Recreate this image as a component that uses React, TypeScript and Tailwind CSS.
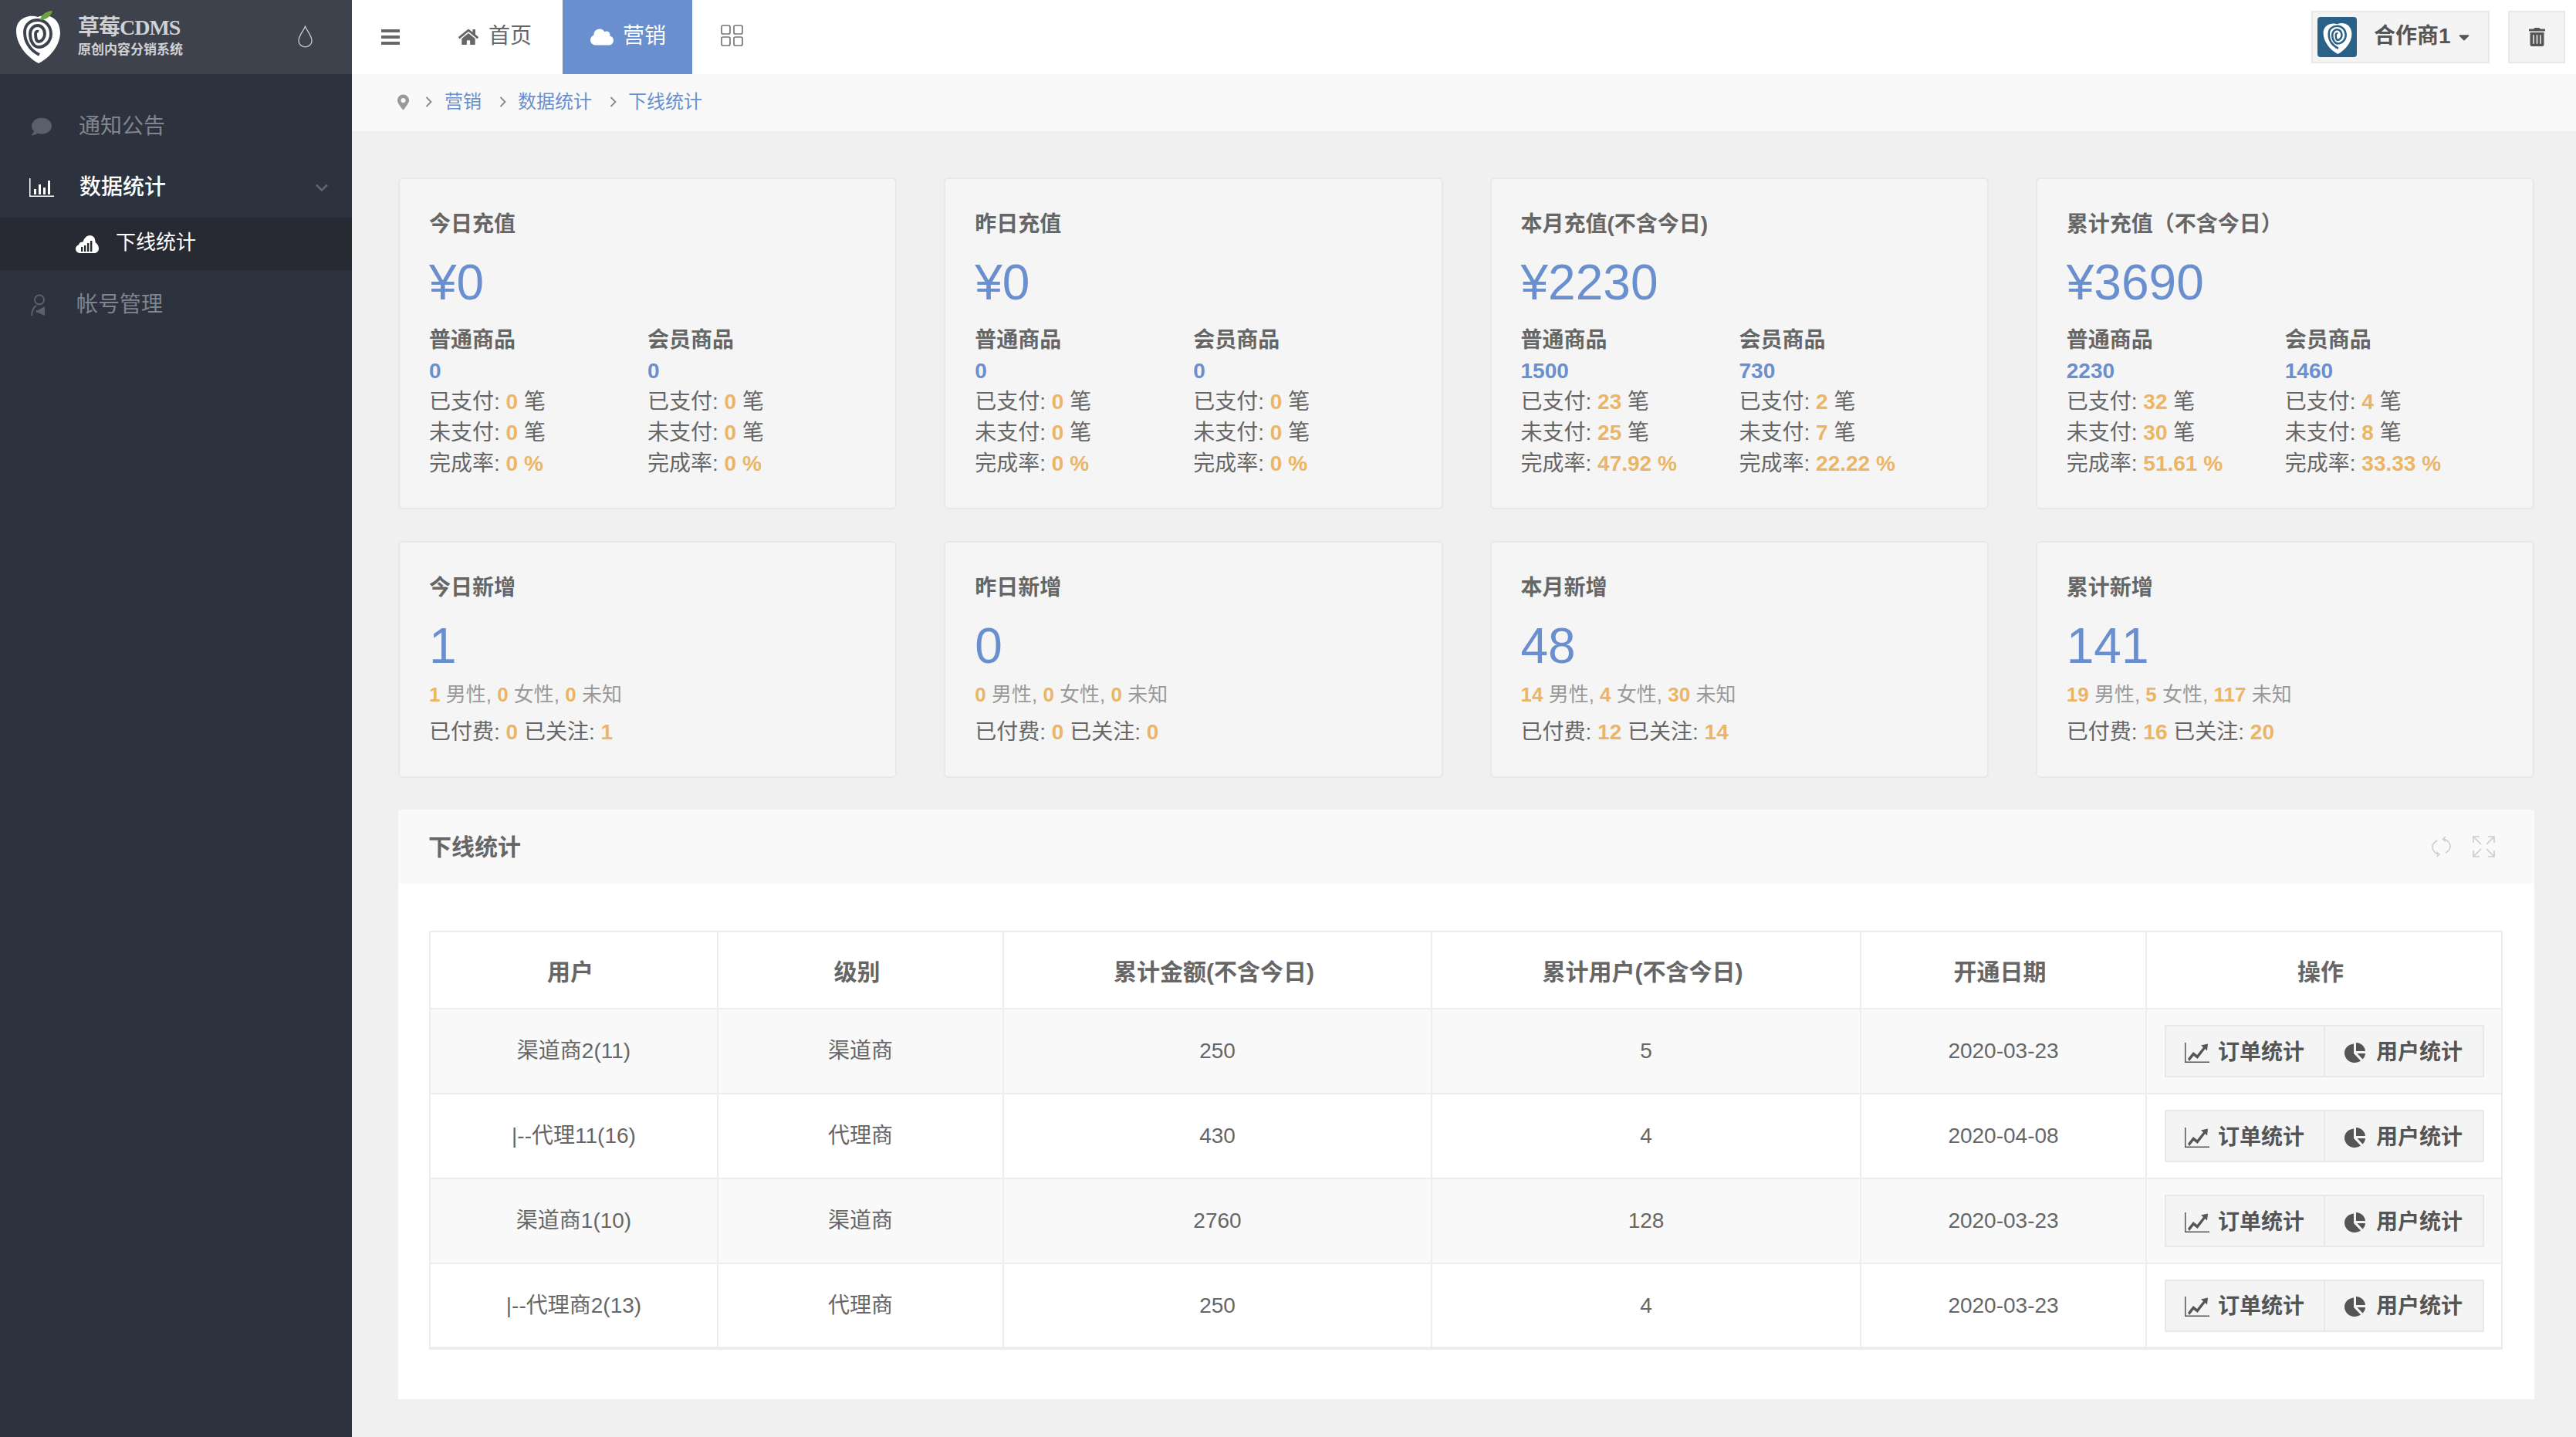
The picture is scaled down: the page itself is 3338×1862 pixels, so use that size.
import { FaCloud, FaComment, FaHome, FaMapMarkerAlt, FaTrashAlt, FaCaretDown } from "react-icons/fa";

function Fruit({ spiral, className }: { spiral: string; className?: string }) {
  return (
    <svg viewBox="0 0 57 68" className={className}>
      <path d="M28 8C38 4 56 6 57 28C57 46 42 62 29 68C14 60 0 44 0 26C0 10 16 4 28 8Z" fill="#fff" />
      <path
        d="M30 57C16 50 11 38 11 28C11 17 19 12 28 12C38 12 45 20 45 30C45 40 37 47 29 47C22 47 18 38 18 30C18 23 23 19 28 19C33 19 37 24 37 30C37 35 33 40 29 40C26 40 25 34 25 30C25 27 27 26 29 27"
        fill="none"
        stroke={spiral}
        strokeWidth="3.9"
      />
    </svg>
  );
}

function BarChartIcon({ className }: { className?: string }) {
  return (
    <svg viewBox="0 0 32 24" className={className} fill="currentColor">
      <path d="M0 0h1.500v22.500H32V24H0z" />
      <path d="M6 14h3v7H6zM12 8h3v13h-3zM18 12h3v9h-3zM24 3h3v18h-3z" />
    </svg>
  );
}

function CloudBarsIcon({ className }: { className?: string }) {
  return (
    <svg viewBox="0 0 30 23" className={className}>
      <path fill="#fff" d="M6 23C2.500 23 0 20.500 0 17.500C0 15 1.500 13 4 12.200C4.500 9.500 6.800 8 9.500 8.500C11 3.500 14.500 0 18.500 0C23 0 25.800 3.800 25.500 9C28 10.500 30 13.500 30 17C30 20.500 27.500 23 24 23Z" />
      <path fill="#272a33" d="M7 15h2.400v6H7zM11 13h2.400v8H11zM15 10h2.400v11H15zM19 7h2.400v14H19z" />
    </svg>
  );
}

function UserVoiceIcon({ className }: { className?: string }) {
  return (
    <svg viewBox="0 0 21 29" className={className} fill="none" stroke="currentColor" strokeWidth="2">
      <circle cx="11" cy="7.500" r="6" />
      <path d="M7 15C3 17 1.500 22 1 28" />
      <path fill="currentColor" stroke="none" d="M9 21l9-5v12l-9-4H7v-3z" />
    </svg>
  );
}

function DropIcon({ className }: { className?: string }) {
  return (
    <svg viewBox="0 0 20 30" className={className} fill="none" stroke="currentColor" strokeWidth="1.400">
      <path d="M10 1C7 8 1 14 1 20.500C1 25.500 5 29 10 29C15 29 19 25.500 19 20.500C19 14 13 8 10 1Z" />
    </svg>
  );
}

function AppsIcon({ className }: { className?: string }) {
  return (
    <svg viewBox="0 0 29 28" className={className} fill="none" stroke="currentColor" strokeWidth="1.700">
      <rect x="1" y="1" width="11" height="11" rx="2" />
      <rect x="17" y="1" width="11" height="11" rx="2" />
      <rect x="1" y="16" width="11" height="11" rx="2" />
      <rect x="17" y="16" width="11" height="11" rx="2" />
    </svg>
  );
}

function BarsIcon({ className }: { className?: string }) {
  return (
    <svg viewBox="0 0 24 20" className={className} fill="currentColor">
      <rect x="0" y="0" width="24" height="4" rx="0.500" />
      <rect x="0" y="8" width="24" height="4" rx="0.500" />
      <rect x="0" y="16" width="24" height="4" rx="0.500" />
    </svg>
  );
}

function LineChartIcon({ className }: { className?: string }) {
  return (
    <svg viewBox="0 0 32 26" className={className} fill="currentColor">
      <path d="M0 0h1.500v24.500H32V26H0z" />
      <path d="M4 21l7-9 5 4 8-10-3-2.500 9-2-1 9-2.500-2.500-10 13-5-4-5.500 7z" />
    </svg>
  );
}

function PieIcon({ className }: { className?: string }) {
  return (
    <svg viewBox="0 0 27 26" className={className} fill="currentColor">
      <path d="M12 1.500V14l9 9.500C18.800 25 16 26 13 26C5.800 26 0 20.200 0 13.500C0 7 5.300 2 12 1.500Z" />
      <path d="M15 0C21.500 0 26.500 5 27 11H15z" />
      <path d="M16.500 14H27C26.800 17 25.500 20 23.500 21.500z" />
    </svg>
  );
}

function RefreshIcon({ className }: { className?: string }) {
  return (
    <svg viewBox="0 0 25 28" className={className} fill="none" stroke="currentColor" strokeWidth="1.500">
      <path d="M7 6C3.500 8 1 10.500 1 14.500C1 18.500 4 22 8 24" />
      <path d="M18 22C21.500 20 24 17.500 24 13.500C24 9.500 21 6 16 4" />
      <path d="M18 1L14.500 4.200L18 7.500M6.500 21L10 24L6.500 27" />
    </svg>
  );
}

function ExpandIcon({ className }: { className?: string }) {
  return (
    <svg viewBox="0 0 29 28" className={className} fill="none" stroke="currentColor" strokeWidth="1.600">
      <path d="M1 9V1H9M1 1L11 11M20 1H28V9M28 1L18 11M1 19V27H9M1 27L11 17M28 19V27H20M28 27L18 17" />
    </svg>
  );
}

const Chevron = () => (
  <svg viewBox="0 0 9 14" className="w-[9px] h-[14px] text-[#888]" fill="none" stroke="currentColor" strokeWidth="1.800">
    <path d="M1.500 1L7.500 7L1.500 13" />
  </svg>
);

const Num = ({ children }: { children: React.ReactNode }) => (
  <span className="font-bold text-[#ecb566]">{children}</span>
);

interface SalesSide {
  amount: string;
  paid: string;
  unpaid: string;
  rate: string;
}

const salesCards: { title: string; total: string; normal: SalesSide; member: SalesSide }[] = [
  {
    title: "今日充值",
    total: "¥0",
    normal: { amount: "0", paid: "0", unpaid: "0", rate: "0" },
    member: { amount: "0", paid: "0", unpaid: "0", rate: "0" },
  },
  {
    title: "昨日充值",
    total: "¥0",
    normal: { amount: "0", paid: "0", unpaid: "0", rate: "0" },
    member: { amount: "0", paid: "0", unpaid: "0", rate: "0" },
  },
  {
    title: "本月充值(不含今日)",
    total: "¥2230",
    normal: { amount: "1500", paid: "23", unpaid: "25", rate: "47.92" },
    member: { amount: "730", paid: "2", unpaid: "7", rate: "22.22" },
  },
  {
    title: "累计充值（不含今日）",
    total: "¥3690",
    normal: { amount: "2230", paid: "32", unpaid: "30", rate: "51.61" },
    member: { amount: "1460", paid: "4", unpaid: "8", rate: "33.33" },
  },
];

const userCards = [
  { title: "今日新增", total: "1", male: "1", female: "0", unknown: "0", paid: "0", follow: "1" },
  { title: "昨日新增", total: "0", male: "0", female: "0", unknown: "0", paid: "0", follow: "0" },
  { title: "本月新增", total: "48", male: "14", female: "4", unknown: "30", paid: "12", follow: "14" },
  { title: "累计新增", total: "141", male: "19", female: "5", unknown: "117", paid: "16", follow: "20" },
];

const rows = [
  { user: "渠道商2(11)", level: "渠道商", amount: "250", users: "5", date: "2020-03-23" },
  { user: "|--代理11(16)", level: "代理商", amount: "430", users: "4", date: "2020-04-08" },
  { user: "渠道商1(10)", level: "渠道商", amount: "2760", users: "128", date: "2020-03-23" },
  { user: "|--代理商2(13)", level: "代理商", amount: "250", users: "4", date: "2020-03-23" },
];

function SalesColumn({ name, side }: { name: string; side: SalesSide }) {
  return (
    <div className="leading-[40px]">
      <div className="font-semibold">{name}</div>
      <div className="font-bold text-[#6a8fce]">{side.amount}</div>
      <div>已支付: <Num>{side.paid}</Num> 笔</div>
      <div>未支付: <Num>{side.unpaid}</Num> 笔</div>
      <div>完成率: <Num>{side.rate} %</Num></div>
    </div>
  );
}

const cardClass = "rounded-[6px] border-2 border-[#e8e8e8] bg-[#f5f5f5] px-[38px] pt-[39px] pb-[37px]";

export default function App() {
  return (
    <div className="flex min-h-screen w-full overflow-hidden bg-[#f0f0f0] text-[28px] text-[#666] [font-family:'Liberation_Sans','Noto_Sans_CJK_SC',sans-serif]">
      {/* Sidebar */}
      <aside className="w-[456px] shrink-0 bg-[#2d333e]">
        <div className="relative flex h-[96px] items-center bg-[#3e424d] pl-[21px]">
          <div className="relative h-[68px] w-[57px]">
            <Fruit spiral="#3e424d" className="h-[68px] w-[57px]" />
            <svg viewBox="0 0 16 12" className="absolute left-[31px] top-0 h-[12px] w-[16px]">
              <path d="M0 12C1 5 8 0 16 0C14 7 8 12 0 12Z" fill="#6ca43c" />
            </svg>
          </div>
          <div className="ml-[23px] text-[#d0d1d4]">
            <div className="text-[28px] leading-[34px] font-bold [font-family:'Liberation_Serif','Noto_Sans_CJK_SC',serif] tracking-[-1px]">草莓CDMS</div>
            <div className="text-[17px] leading-[24px] font-bold">原创内容分销系统</div>
          </div>
          <DropIcon className="absolute left-[386px] top-[33px] h-[29px] w-[19px] text-[#ccc]" />
        </div>
        <nav className="pt-[28px]">
          <div className="flex h-[80px] items-center pl-[40px] text-[#80858d]">
            <FaComment className="h-[26px] w-[28px] text-[#5a6069]" />
            <span className="ml-[34px]">通知公告</span>
          </div>
          <div className="flex h-[78px] items-center pl-[38px] font-medium text-white">
            <BarChartIcon className="h-[24px] w-[32px]" />
            <span className="ml-[33px] flex-1">数据统计</span>
            <svg viewBox="0 0 16 10" className="mr-[31px] h-[10px] w-[16px] text-[#5f6570]" fill="none" stroke="currentColor" strokeWidth="2.600">
              <path d="M1 1.500L8 8.500L15 1.500" />
            </svg>
          </div>
          <div className="flex h-[68px] items-center bg-[#272a33] pb-[4px] pl-[98px] text-[26px] text-white">
            <CloudBarsIcon className="mt-[4px] h-[23px] w-[30px]" />
            <span className="ml-[22px]">下线统计</span>
          </div>
          <div className="flex h-[90px] items-center pl-[40px] text-[#80858d]">
            <UserVoiceIcon className="h-[29px] w-[21px] text-[#5a6069]" />
            <span className="ml-[38px]">帐号管理</span>
          </div>
        </nav>
      </aside>

      <div className="min-w-0 flex-1">
        {/* Top bar */}
        <header className="flex h-[96px] items-center bg-white">
          <BarsIcon className="ml-[38px] h-[20px] w-[24px] text-[#666]" />
          <div className="ml-[76px] flex items-center">
            <FaHome className="h-[24px] w-[26px]" />
            <span className="mb-[3px] ml-[13px] text-[#666]">首页</span>
          </div>
          <div className="ml-[40px] flex h-full w-[168px] items-center bg-[#6a8fce] pl-[36px] text-white">
            <FaCloud className="h-[26px] w-[30px]" />
            <span className="mb-[3px] ml-[12px]">营销</span>
          </div>
          <AppsIcon className="mb-[4px] ml-[37px] h-[28px] w-[29px] text-[#777]" />
          <div className="ml-auto flex items-center">
            <div className="flex h-[68px] w-[231px] items-center border-2 border-[#e8e8e8] bg-[#f4f4f4] pl-[6px]">
              <div className="flex h-[52px] w-[51px] items-center justify-center rounded-[4px] bg-[#2a6189]">
                <Fruit spiral="#2a6189" className="h-[44px] w-[38px]" />
              </div>
              <span className="mb-[2px] ml-[22px] font-semibold text-[#555]">合作商1</span>
              <FaCaretDown className="ml-[8px] h-[22px] w-[18px] text-[#555]" />
            </div>
            <div className="ml-[24px] mr-[14px] flex h-[68px] w-[74px] items-center justify-center border-2 border-[#e8e8e8] bg-[#f4f4f4]">
              <FaTrashAlt className="h-[24px] w-[21px] text-[#555]" />
            </div>
          </div>
        </header>

        {/* Breadcrumb */}
        <div className="flex h-[74px] items-center bg-[#f9f9f9] pb-[2px] pl-[59px] text-[24px] text-[#6a8fce]">
          <FaMapMarkerAlt className="h-[21px] w-[15px] text-[#999]" />
          <span className="ml-[21px]"><Chevron /></span>
          <span className="ml-[16px]">营销</span>
          <span className="ml-[23px]"><Chevron /></span>
          <span className="ml-[15px]">数据统计</span>
          <span className="ml-[23px]"><Chevron /></span>
          <span className="ml-[15px]">下线统计</span>
        </div>

        <main className="pl-[60px] pr-[54px] pt-[60px] pb-[48px]">
          <div className="grid grid-cols-4 gap-x-[61px] gap-y-[41px]">
            {salesCards.map((c) => (
              <div key={c.title} className={cardClass}>
                <div className="font-semibold leading-[40px]">{c.title}</div>
                <div className="mt-[20px] text-[64px] leading-[70px] text-[#6a8fce]">{c.total}</div>
                <div className="mt-[20px] grid grid-cols-[283px_1fr]">
                  <SalesColumn name="普通商品" side={c.normal} />
                  <SalesColumn name="会员商品" side={c.member} />
                </div>
              </div>
            ))}
            {userCards.map((c) => (
              <div key={c.title} className={cardClass}>
                <div className="font-semibold leading-[40px]">{c.title}</div>
                <div className="mt-[20px] text-[64px] leading-[70px] text-[#6a8fce]">{c.total}</div>
                <div className="mt-[8px] text-[26px] leading-[40px] text-[#9a9a9a]">
                  <Num>{c.male}</Num> 男性, <Num>{c.female}</Num> 女性, <Num>{c.unknown}</Num> 未知
                </div>
                <div className="mt-[9px] leading-[40px]">
                  已付费: <Num>{c.paid}</Num> 已关注: <Num>{c.follow}</Num>
                </div>
              </div>
            ))}
          </div>

          {/* Panel */}
          <section className="mt-[41px] bg-white">
            <div className="flex h-[96px] items-center justify-between bg-[#f9f9f9] pl-[39px] pr-[51px]">
              <h2 className="text-[30px] font-semibold">下线统计</h2>
              <div className="flex items-center gap-[28px] text-[#ccc]">
                <RefreshIcon className="h-[28px] w-[25px]" />
                <ExpandIcon className="h-[28px] w-[29px]" />
              </div>
            </div>
            <div className="pl-[40px] pr-[43px] pt-[61px] pb-[64px]">
              <table className="w-full table-fixed border-collapse border-2 border-b-4 border-[#ededed] text-center">
                <colgroup>
                  <col className="w-[373px]" />
                  <col className="w-[370px]" />
                  <col className="w-[555px]" />
                  <col className="w-[556px]" />
                  <col className="w-[370px]" />
                  <col className="w-[461px]" />
                </colgroup>
                <thead>
                  <tr className="h-[100px]">
                    {["用户", "级别", "累计金额(不含今日)", "累计用户(不含今日)", "开通日期", "操作"].map((h) => (
                      <th key={h} className="border-2 border-[#ededed] pr-[9px] pt-[4px] text-[30px] font-semibold">{h}</th>
                    ))}
                  </tr>
                </thead>
                <tbody>
                  {rows.map((r, i) => (
                    <tr key={r.user} className={i % 2 === 0 ? "h-[110px] bg-[#f9f9f9]" : "h-[110px] bg-white"}>
                      <td className="border-2 border-[#ededed]">{r.user}</td>
                      <td className="border-2 border-[#ededed]">{r.level}</td>
                      <td className="border-2 border-[#ededed]">{r.amount}</td>
                      <td className="border-2 border-[#ededed]">{r.users}</td>
                      <td className="border-2 border-[#ededed]">{r.date}</td>
                      <td className="border-2 border-[#ededed]">
                        <div className="mx-auto flex h-[68px] w-[414px] border-2 border-[#e8e8e8] bg-[#f4f4f4] font-semibold text-[#555]">
                          <div className="flex flex-1 items-center justify-center gap-[11px] border-r-2 border-[#e8e8e8] pt-[3px]">
                            <LineChartIcon className="h-[26px] w-[32px]" />
                            <span>订单统计</span>
                          </div>
                          <div className="flex flex-1 items-center justify-center gap-[14px] pt-[3px]">
                            <PieIcon className="h-[26px] w-[27px]" />
                            <span>用户统计</span>
                          </div>
                        </div>
                      </td>
                    </tr>
                  ))}
                </tbody>
              </table>
            </div>
          </section>
        </main>
      </div>
    </div>
  );
}
